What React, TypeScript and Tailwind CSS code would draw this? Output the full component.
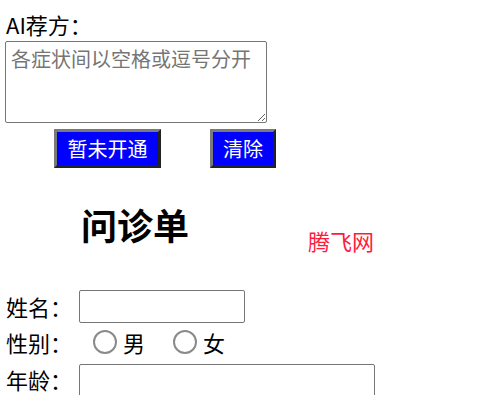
const font = { fontFamily: '"Noto Sans CJK SC", "Noto Sans", sans-serif' };

function FieldRow({ label, height, children }: { label: string; height: string; children: React.ReactNode }) {
  return (
    <div className={`flex items-center ${height}`}>
      <span className="w-[79px] shrink-0 pl-[6px] text-[22px] leading-none">{label}</span>
      {children}
    </div>
  );
}

function Radio({ label }: { label: string }) {
  return (
    <label className="flex items-center">
      <input
        type="radio"
        name="sex"
        className="h-[24px] w-[24px] appearance-none rounded-full border-2 border-[#8a8a8a] bg-white"
      />
      <span className="ml-[6px] text-[22px] leading-none">{label}</span>
    </label>
  );
}

export default function App() {
  return (
    <div className="min-h-screen bg-white text-black" style={font}>
      {/* AI 荐方 */}
      <div className="h-[41px] pl-[6px] pt-[13px] text-[22px] leading-none">AI荐方：</div>
      <textarea
        className="ml-[5px] block h-[82px] w-[262px] rounded-[2px] border border-[#767676] px-[5px] py-[4px] text-[20px] leading-[26px] placeholder:text-[#757575]"
        placeholder="各症状间以空格或逗号分开"
        style={font}
      />
      <div className="mt-[6px] flex">
        <button
          type="button"
          className="ml-[54px] flex h-[39px] w-[107px] items-center justify-center border-[3px] border-t-[#7a7a7a] border-l-[#7a7a7a] border-r-[#222] border-b-[#222] bg-[#0000ff] text-[20px] leading-none text-white"
        >
          暂未开通
        </button>
        <button
          type="button"
          className="ml-[49px] flex h-[39px] w-[66px] items-center justify-center border-[3px] border-t-[#7a7a7a] border-l-[#7a7a7a] border-r-[#222] border-b-[#222] bg-[#0000ff] text-[20px] leading-none text-white"
        >
          清除
        </button>
      </div>

      {/* 标题 */}
      <div className="flex h-[121px] items-start">
        <h1 className="ml-[81px] mt-[38px] text-[36px] font-bold leading-none">问诊单</h1>
        <span className="ml-[119px] mt-[61px] text-[22px] leading-none text-[#ff1a3c]">腾飞网</span>
      </div>

      {/* 表单 */}
      <FieldRow label="姓名：" height="h-[34px]">
        <input type="text" className="h-[33px] w-[166px] rounded-[2px] border border-[#767676]" />
      </FieldRow>
      <FieldRow label="性别：" height="h-[37px]">
        <div className="ml-[14px] flex items-center gap-[28px]">
          <Radio label="男" />
          <Radio label="女" />
        </div>
      </FieldRow>
      <div className="flex items-start pt-[4px]">
        <span className="w-[79px] shrink-0 pl-[6px] pt-[4px] text-[22px] leading-none">年龄：</span>
        <input type="text" className="h-[34px] w-[296px] rounded-[2px] border border-[#767676]" />
      </div>
    </div>
  );
}
